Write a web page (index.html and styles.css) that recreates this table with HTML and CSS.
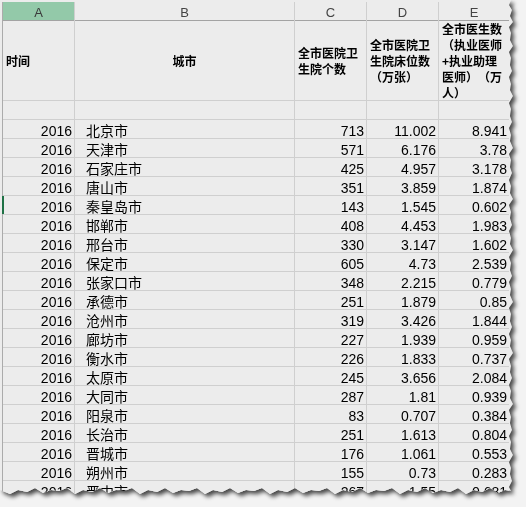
FILE: index.html
```html
<!DOCTYPE html>
<html lang="zh">
<head>
<meta charset="utf-8">
<title>医院统计</title>
<link rel="stylesheet" href="styles.css">
</head>
<body>
<div class="paper">
  <div class="sheet">
    <div class="grid">
      <div class="ch sel">A</div>
      <div class="ch">B</div>
      <div class="ch">C</div>
      <div class="ch">D</div>
      <div class="ch">E</div>

      <div class="hd">时间</div>
      <div class="hd center">城市</div>
      <div class="hd">全市医院卫<br>生院个数</div>
      <div class="hd">全市医院卫<br>生院床位数<br>（万张）</div>
      <div class="hd">全市医生数<br>（执业医师<br>+执业助理<br>医师）（万<br>人）</div>

      <div class="c"></div><div class="c"></div><div class="c"></div><div class="c"></div><div class="c"></div>

      <div class="c n">2016</div><div class="c t">北京市</div><div class="c n">713</div><div class="c n">11.002</div><div class="c n">8.941</div>
      <div class="c n">2016</div><div class="c t">天津市</div><div class="c n">571</div><div class="c n">6.176</div><div class="c n">3.78</div>
      <div class="c n">2016</div><div class="c t">石家庄市</div><div class="c n">425</div><div class="c n">4.957</div><div class="c n">3.178</div>
      <div class="c n">2016</div><div class="c t">唐山市</div><div class="c n">351</div><div class="c n">3.859</div><div class="c n">1.874</div>
      <div class="c n active">2016</div><div class="c t">秦皇岛市</div><div class="c n">143</div><div class="c n">1.545</div><div class="c n">0.602</div>
      <div class="c n">2016</div><div class="c t">邯郸市</div><div class="c n">408</div><div class="c n">4.453</div><div class="c n">1.983</div>
      <div class="c n">2016</div><div class="c t">邢台市</div><div class="c n">330</div><div class="c n">3.147</div><div class="c n">1.602</div>
      <div class="c n">2016</div><div class="c t">保定市</div><div class="c n">605</div><div class="c n">4.73</div><div class="c n">2.539</div>
      <div class="c n">2016</div><div class="c t">张家口市</div><div class="c n">348</div><div class="c n">2.215</div><div class="c n">0.779</div>
      <div class="c n">2016</div><div class="c t">承德市</div><div class="c n">251</div><div class="c n">1.879</div><div class="c n">0.85</div>
      <div class="c n">2016</div><div class="c t">沧州市</div><div class="c n">319</div><div class="c n">3.426</div><div class="c n">1.844</div>
      <div class="c n">2016</div><div class="c t">廊坊市</div><div class="c n">227</div><div class="c n">1.939</div><div class="c n">0.959</div>
      <div class="c n">2016</div><div class="c t">衡水市</div><div class="c n">226</div><div class="c n">1.833</div><div class="c n">0.737</div>
      <div class="c n">2016</div><div class="c t">太原市</div><div class="c n">245</div><div class="c n">3.656</div><div class="c n">2.084</div>
      <div class="c n">2016</div><div class="c t">大同市</div><div class="c n">287</div><div class="c n">1.81</div><div class="c n">0.939</div>
      <div class="c n">2016</div><div class="c t">阳泉市</div><div class="c n">83</div><div class="c n">0.707</div><div class="c n">0.384</div>
      <div class="c n">2016</div><div class="c t">长治市</div><div class="c n">251</div><div class="c n">1.613</div><div class="c n">0.804</div>
      <div class="c n">2016</div><div class="c t">晋城市</div><div class="c n">176</div><div class="c n">1.061</div><div class="c n">0.553</div>
      <div class="c n">2016</div><div class="c t">朔州市</div><div class="c n">155</div><div class="c n">0.73</div><div class="c n">0.283</div>
      <div class="c n">2016</div><div class="c t">晋中市</div><div class="c n">267</div><div class="c n">1.55</div><div class="c n">0.681</div>
    </div>
  </div>
</div>
</body>
</html>
```

FILE: styles.css
```css
html, body {
  margin: 0;
  padding: 0;
  background: #f3f3f3;
  width: 526px;
  height: 507px;
  overflow: hidden;
}

.paper {
  width: 518px;
  height: 502px;
  filter: drop-shadow(3px 3px 2px rgba(0, 0, 0, 0.7));
}

.sheet {
  width: 516px;
  height: 500px;
  box-sizing: border-box;
  padding: 2px 0 0 2px;
  background: #ececec;
  overflow: hidden;
  clip-path: polygon(
    0 0, 511px 0, 509px 5px, 512px 10px, 510px 16px, 513px 22px, 509px 27px, 511px 33px, 510px 40px, 513px 46px,
    509px 52px, 511px 58px, 510px 65px, 512px 71px, 509px 77px, 511px 84px, 510px 90px, 513px 96px, 509px 103px,
    511px 109px, 510px 116px, 512px 122px, 509px 128px, 511px 135px, 510px 141px, 513px 148px, 509px 154px,
    511px 160px, 510px 167px, 512px 173px, 509px 180px, 511px 186px, 510px 193px, 513px 199px, 509px 205px,
    511px 212px, 510px 218px, 512px 225px, 509px 231px, 511px 238px, 510px 244px, 513px 250px, 509px 257px,
    511px 263px, 510px 270px, 512px 276px, 509px 282px, 511px 289px, 510px 295px, 513px 302px, 509px 308px,
    511px 314px, 510px 321px, 512px 327px, 509px 334px, 511px 340px, 510px 346px, 513px 353px, 509px 359px,
    511px 366px, 510px 372px, 512px 378px, 509px 385px, 511px 391px, 510px 398px, 513px 404px, 509px 410px,
    511px 417px, 510px 423px, 512px 430px, 509px 436px, 511px 442px, 510px 449px, 513px 455px, 509px 462px,
    511px 468px, 510px 474px, 512px 481px, 509px 487px, 511px 491px,
    505px 490px, 498px 493px, 490px 488px, 482px 492px, 474px 490px, 466px 494px, 458px 488px, 450px 492px,
    441px 490px, 433px 493px, 425px 488px, 417px 492px, 408px 490px, 400px 494px, 392px 488px, 384px 491px,
    376px 490px, 368px 493px, 360px 488px, 352px 492px, 343px 490px, 335px 494px, 327px 488px, 319px 491px,
    311px 490px, 303px 493px, 295px 488px, 287px 492px, 278px 490px, 270px 494px, 262px 488px, 254px 491px,
    246px 490px, 238px 493px, 230px 488px, 222px 492px, 213px 490px, 205px 494px, 197px 488px, 189px 491px,
    181px 490px, 173px 493px, 165px 488px, 157px 492px, 148px 490px, 140px 494px, 132px 488px, 124px 491px,
    116px 490px, 108px 493px, 100px 488px, 92px 492px, 83px 490px, 75px 494px, 67px 488px, 59px 491px,
    51px 490px, 43px 493px, 35px 488px, 27px 492px, 18px 490px, 10px 494px, 0 490px
  );
}

.grid {
  display: grid;
  grid-template-columns: 71px 219px 71px 71px 70px;
  grid-template-rows: 18px 79px 18px repeat(20, 18px);
  gap: 1px;
  background: #cfcfcf;
  border-left: 1px solid #ababab;
  width: max-content;
}

.ch {
  background: #ececec;
  font-family: "Liberation Sans", Arial, sans-serif;
  font-size: 13px;
  color: #444;
  text-align: center;
  line-height: 18px;
  padding-top: 2px;
  box-sizing: border-box;
  height: 18px;
  box-shadow: 0 1px 0 #a3a3a3;
}

.ch.sel {
  background: #93c9a9;
  color: #3a3a3a;
}

.hd {
  background: #ececec;
  display: flex;
  align-items: center;
  padding: 0 3px;
  font-family: "Noto Sans CJK SC", "Noto Sans", sans-serif;
  font-weight: 700;
  font-size: 12px;
  line-height: 16px;
  color: #000;
  white-space: nowrap;
  text-spacing-trim: space-all;
}

.hd.center {
  justify-content: center;
}

.c {
  background: #ececec;
  height: 18px;
  box-sizing: border-box;
  white-space: nowrap;
  color: #000;
}

.n {
  font-family: "Liberation Sans", Arial, sans-serif;
  font-size: 14px;
  line-height: 16px;
  padding: 3px 2px 0 0;
  text-align: right;
}

.t {
  font-family: "Noto Sans CJK SC", "Noto Sans", sans-serif;
  font-size: 14px;
  line-height: 16px;
  padding: 2px 0 0 11px;
}

.active {
  box-shadow: inset 1px 0 0 #1e7145, -1px 0 0 #1e7145;
}
```
